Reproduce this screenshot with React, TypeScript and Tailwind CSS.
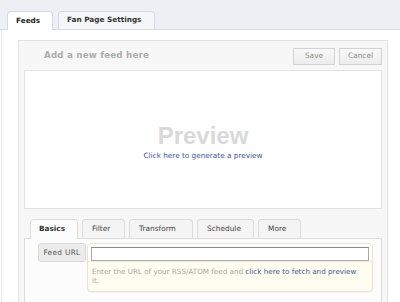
import React from "react";

export default function App() {
  const font = { fontFamily: '"DejaVu Sans", "Liberation Sans", sans-serif' };
  return (
    <div className="w-[400px] h-[302px] overflow-hidden bg-white text-[#333]" style={font}>
      {/* top tab bar */}
      <div className="h-[30px] bg-[#edeff4] border-b border-[#d4d9e2] flex items-end pl-[7px] gap-[5px]">
        <div className="h-[19px] w-[46px] -mb-px bg-white border border-b-0 border-[#d4d9e2] rounded-t-[4px] flex items-center pl-[8px] text-[7.3px] font-bold text-[#222]">
          Feeds
        </div>
        <div className="h-[18px] w-[97px] bg-[#f5f6f9] border border-b-0 border-[#d4d9e2] rounded-t-[4px] flex items-center pl-[8px] text-[7.3px] font-bold text-[#333]">
          Fan Page Settings
        </div>
      </div>

      {/* body */}
      <div className="h-[272px] ml-px border-l border-[#e4e6ea] pl-[16px] pt-[10px]">
        <div className="w-[370px] h-[300px] bg-[#f7f7f7] border border-[#e3e3e3]">
          {/* header */}
          <div className="h-[29px] flex items-center justify-between pl-[25px] pr-[5px]">
            <div className="text-[8.7px] font-bold text-[#acacac] tracking-[0.2px]">Add a new feed here</div>
            <div className="flex gap-[4px] pt-[1px]">
              <div className="h-[17px] w-[42px] bg-gradient-to-b from-[#f9f9f9] to-[#ececec] border border-[#d2d2d2] flex items-center justify-center text-[7.4px] text-[#8a8a8a]">
                Save
              </div>
              <div className="h-[17px] w-[43px] bg-gradient-to-b from-[#f9f9f9] to-[#ececec] border border-[#d2d2d2] flex items-center justify-center text-[7.4px] text-[#8a8a8a]">
                Cancel
              </div>
            </div>
          </div>

          {/* preview */}
          <div className="mx-[5px] h-[139px] bg-white border border-[#e3e3e3] flex flex-col items-center justify-center">
            <div className="text-[24px] leading-[26px] font-bold text-[#d9d9d9] mt-[6px]" style={{ fontFamily: '"Liberation Sans", sans-serif' }}>
              Preview
            </div>
            <div className="text-[7.3px] text-[#3b5998] mt-[2px]">Click here to generate a preview</div>
          </div>

          {/* bottom tabs */}
          <div className="mx-[5px] mt-[9px]">
            <div className="flex items-end gap-[4px] pl-[6px] h-[20px]">
              <div className="h-[20px] w-[48px] -mb-px bg-[#fcfcfc] border border-b-0 border-[#dcdcdc] rounded-t-[4px] flex items-center pl-[8px] text-[7.3px] font-bold text-[#333] relative z-10">
                Basics
              </div>
              <div className="h-[19px] w-[43px] bg-[#f4f4f4] border border-b-0 border-[#dcdcdc] rounded-t-[4px] flex items-center pl-[9px] text-[7.4px] text-[#444]">
                Filter
              </div>
              <div className="h-[19px] w-[64px] bg-[#f4f4f4] border border-b-0 border-[#dcdcdc] rounded-t-[4px] flex items-center pl-[9px] text-[7.4px] text-[#444]">
                Transform
              </div>
              <div className="h-[19px] w-[57px] bg-[#f4f4f4] border border-b-0 border-[#dcdcdc] rounded-t-[4px] flex items-center pl-[9px] text-[7.4px] text-[#444]">
                Schedule
              </div>
              <div className="h-[19px] w-[43px] bg-[#f4f4f4] border border-b-0 border-[#dcdcdc] rounded-t-[4px] flex items-center pl-[9px] text-[7.4px] text-[#444]">
                More
              </div>
            </div>
            <div className="h-[80px] bg-[#fcfcfc] border border-[#dcdcdc] pt-[4px] pl-[13px] flex items-start">
              <div className="h-[19px] w-[48px] bg-[#ececec] border border-[#dadada] rounded-[3px] flex items-center justify-center text-[7.4px] text-[#555] tracking-[0.3px] mr-[1px]">
                Feed URL
              </div>
              <div className="w-[286px] bg-[#fffdf0] border border-[#e6e4d4] rounded-[4px] shadow-[0_1px_1px_rgba(0,0,0,0.04)]">
                <div className="bg-white pt-[3px] px-[3px] pb-[0px] rounded-t-[4px]">
                  <div className="h-[14px] bg-white border border-[#a9a9a9] border-t-[#8a8a8a]" />
                </div>
                <div className="px-[4px] pt-[5px] pb-[6px] text-[7.2px] leading-[9px] text-[#a6a6a6] border-t border-[#efedde]">
                  Enter the URL of your RSS/ATOM feed and <span className="text-[#3b5998]">click here to fetch and preview</span>
                  <br />
                  it.
                </div>
              </div>
            </div>
          </div>
        </div>
      </div>
    </div>
  );
}
